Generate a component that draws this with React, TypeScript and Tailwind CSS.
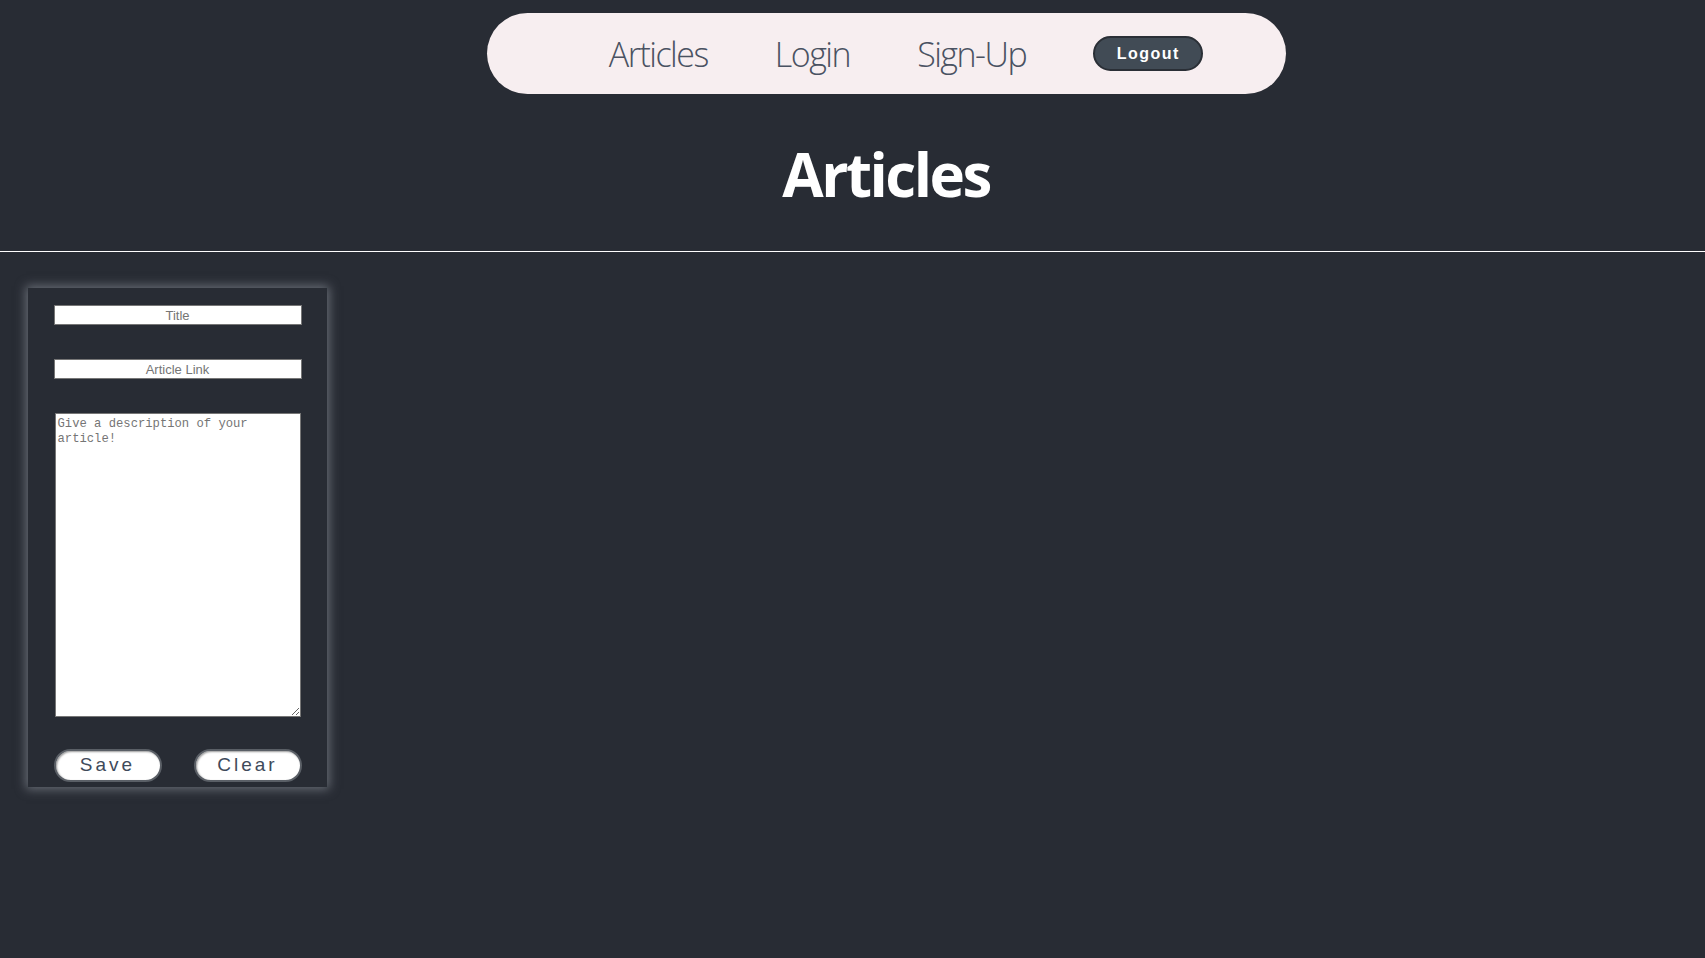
import React from "react";

export default function App() {
  return (
    <div className="min-h-[958px] w-full bg-[#282c34] overflow-hidden" style={{ fontFamily: '"Open Sans", sans-serif' }}>
      <div className="ml-[67px] flex justify-center pt-[13px]">
        <nav className="flex h-[81px] w-[799px] items-center justify-center rounded-full bg-[#f7eef0] pl-[40px]">
          <ul className="flex items-center gap-[67px]">
            <li className="text-[34px] font-light leading-none text-[#4a5262] tracking-[-1.5px]">Articles</li>
            <li className="text-[34px] font-light leading-none text-[#4a5262] tracking-[-1.5px]">Login</li>
            <li className="text-[34px] font-light leading-none text-[#4a5262] tracking-[-1.5px]">Sign-Up</li>
            <li>
              <button className="h-[35px] w-[110px] rounded-full border-2 border-[#2a2f36] bg-[#414b55] text-[16px] font-bold tracking-[1.5px] text-white" style={{ fontFamily: '"Liberation Sans", Arial, sans-serif' }}>
                Logout
              </button>
            </li>
          </ul>
        </nav>
      </div>
      <div className="ml-[67px] flex justify-center pt-[40px]">
        <h1 className="text-[60px] font-bold leading-[80px] text-white tracking-[-2.5px]">Articles</h1>
      </div>
      <div className="mt-[37px] h-px w-full bg-white" />
      <div className="pl-[28px] pt-[36px]">
        <form className="flex h-[499px] w-[299px] flex-col items-center bg-[#282c34] pt-[17px] shadow-[0_0_10px_2px_rgba(160,165,175,0.55)]" style={{ fontFamily: '"Liberation Sans", Arial, sans-serif' }}>
          <input
            placeholder="Title"
            className="h-[20px] w-[248px] border border-[#767676] bg-white text-center text-[13px] text-black placeholder:text-[#757575] outline-none"
          />
          <input
            placeholder="Article Link"
            className="mt-[34px] h-[20px] w-[248px] border border-[#767676] bg-white text-center text-[13px] text-black placeholder:text-[#757575] outline-none"
          />
          <textarea
            placeholder="Give a description of your article!"
            className="mt-[34px] h-[304px] w-[246px] border border-[#767676] bg-white px-[2px] pt-[3px] text-[12.2px] leading-[15px] text-black placeholder:text-[#757575] outline-none"
            style={{ fontFamily: '"Liberation Mono", "DejaVu Sans Mono", monospace' }}
          />
          <div className="mt-[32px] flex w-[248px] justify-between">
            <button type="button" className="h-[33px] w-[108px] rounded-full border-2 border-[#5a5f66] bg-white text-[19px] tracking-[3px] text-[#3e4a5a] shadow-[inset_1px_1px_2px_rgba(0,0,0,0.4)]">
              Save
            </button>
            <button type="button" className="h-[33px] w-[108px] rounded-full border-2 border-[#5a5f66] bg-white text-[19px] tracking-[3px] text-[#3e4a5a] shadow-[inset_1px_1px_2px_rgba(0,0,0,0.4)]">
              Clear
            </button>
          </div>
        </form>
      </div>
    </div>
  );
}
